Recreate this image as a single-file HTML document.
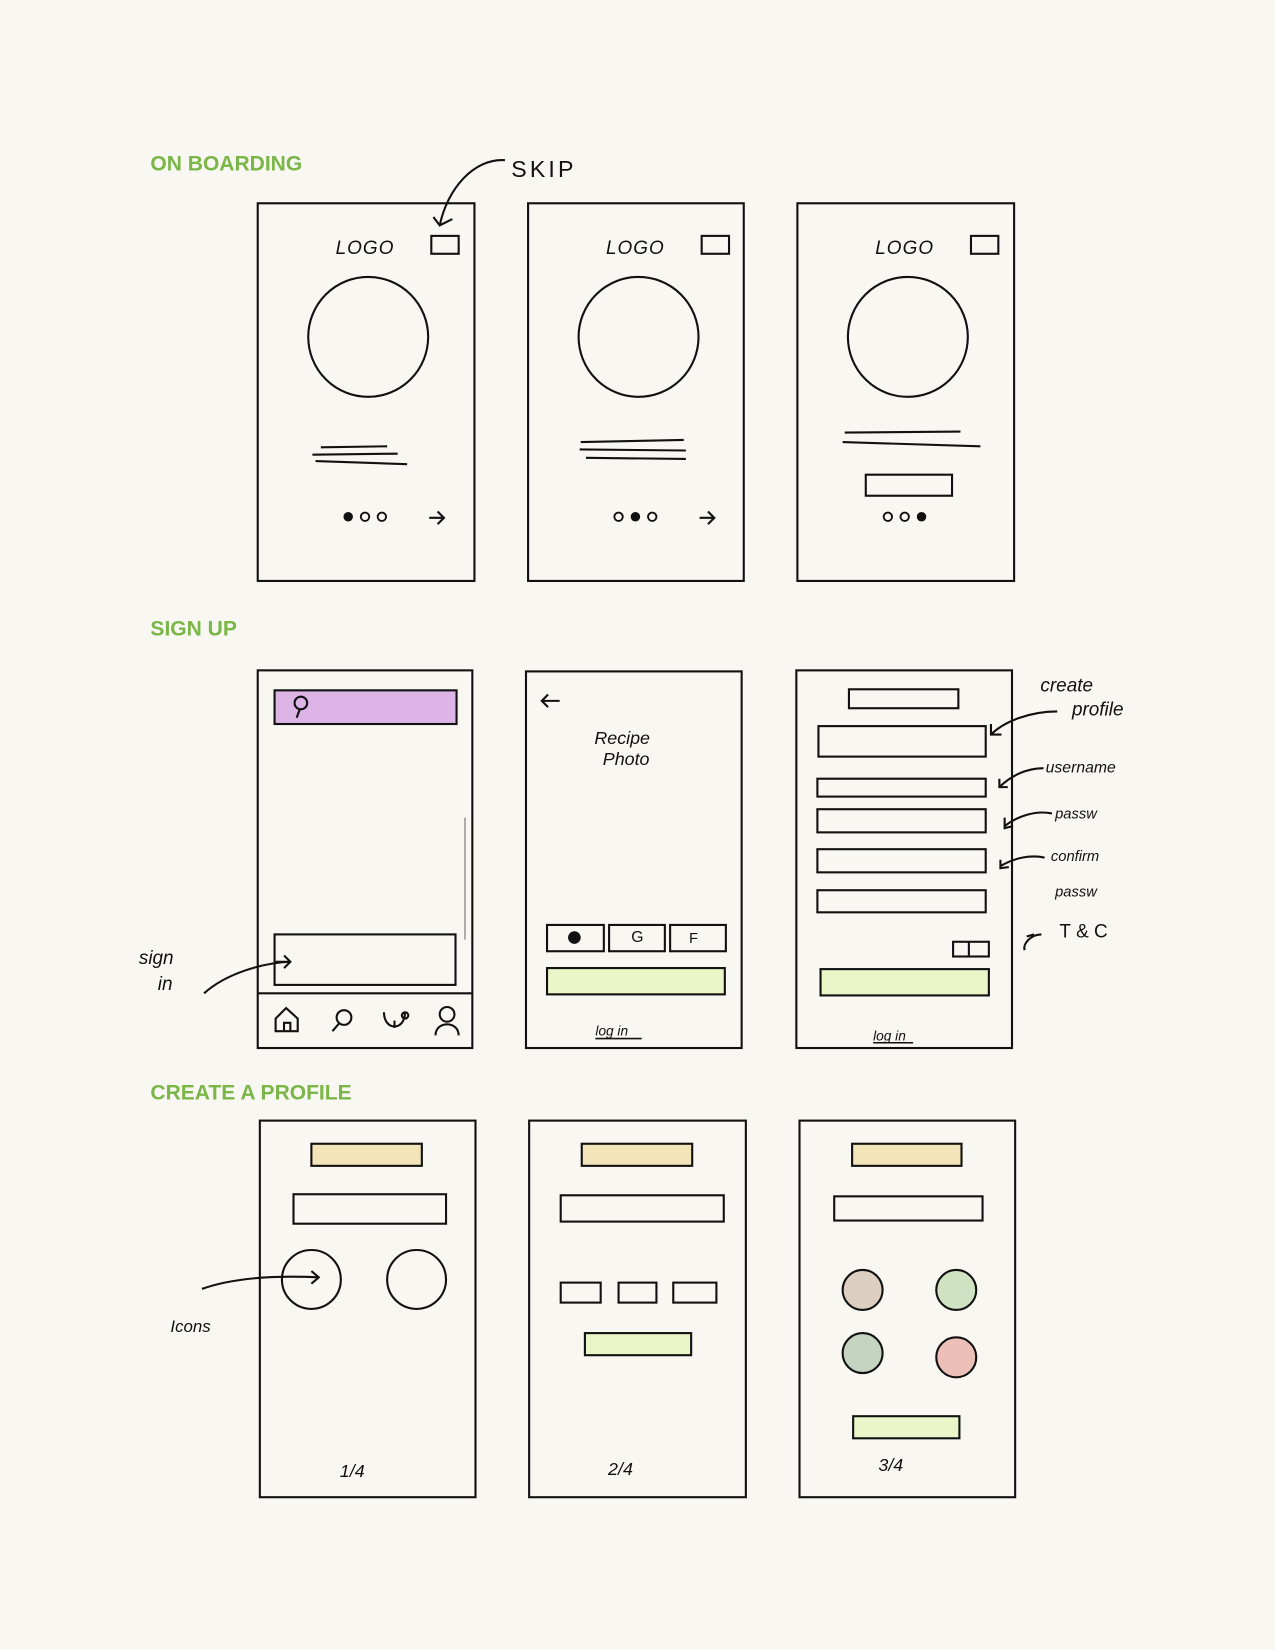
<!DOCTYPE html>
<html><head><meta charset="utf-8"><style>
html,body{margin:0;padding:0;background:#f8f7f2;}
svg{display:block}
.h{font-family:"Liberation Sans",sans-serif;font-weight:bold;font-size:20px;fill:#7ab648}
.hw{font-family:"Liberation Sans",sans-serif;fill:#111;font-style:italic}
</style></head><body>
<svg width="1275" height="1650" viewBox="0 0 1212 1568" xmlns="http://www.w3.org/2000/svg">
<rect width="1212" height="1568" fill="#f8f7f2"/>
<g fill="none" stroke="#111" stroke-width="2">
<rect x="245" y="193" width="206" height="359"/>
<rect x="502" y="193" width="205" height="359"/>
<rect x="758" y="193" width="206" height="359"/>
<rect x="410" y="224" width="26" height="17"/>
<rect x="667" y="224" width="26" height="17"/>
<rect x="923" y="224" width="26" height="17"/>
<circle cx="350" cy="320" r="57"/>
<circle cx="607" cy="320" r="57"/>
<circle cx="863" cy="320" r="57"/>
<path d="M305 425 L368 424 M297 432 L378 431 M300 438 L387 441"/>
<path d="M552 420 L650 418 M551 427 L652 428 M557 435 L652 436"/>
<path d="M803 411 L913 410 M801 420 L932 424"/>
<rect x="823" y="451" width="82" height="20"/>
<path d="M408 492 L422 492 M416 486 L422 492 L416 498"/>
<path d="M665 492 L679 492 M673 486 L679 492 L673 498"/>
<path d="M480 152 C450 150 425 180 418 214 M412 206 L418 214 L430 208"/>
<rect x="245" y="637" width="204" height="359"/>
<rect x="500" y="638" width="205" height="358"/>
<rect x="757" y="637" width="205" height="359"/>
<rect x="261" y="656" width="173" height="32" fill="#dcb4e6"/>
<circle cx="286" cy="668" r="6"/><path d="M285 674 L282 682"/>
<path d="M442 777 L442 893" stroke="#999" stroke-width="1.5"/>
<rect x="261" y="888" width="172" height="48"/>
<path d="M245 944 L449 944"/>
<path d="M262 914 L276 914 M270 908 L276 914 L270 920"/>
<path d="M194 944 C215 925 250 915 276 914"/>
<path d="M262 980 L262 968 L272 958 L283 968 L283 980 Z M270 980 L270 972 L276 972 L276 980"/>
<circle cx="327" cy="967" r="7"/><path d="M322 973 L316 980"/>
<path d="M365 962 C365 980 385 980 385 962 M375 977 L375 970 M385 962 a3 3 0 1 0 0.1 0"/>
<circle cx="425" cy="964" r="7"/><path d="M414 984 C414 970 436 970 436 984"/>
<path d="M515 666 L532 666 M521 660 L515 666 L521 672"/>
<rect x="520" y="879" width="54" height="25"/>
<rect x="579" y="879" width="53" height="25"/>
<rect x="637" y="879" width="53" height="25"/>
<rect x="520" y="920" width="169" height="25" fill="#eaf6c8"/>
<path d="M566 987 L610 987 M830 991 L868 991" stroke-width="1.5"/>
<rect x="807" y="655" width="104" height="18"/>
<rect x="778" y="690" width="159" height="29"/>
<rect x="777" y="740" width="160" height="17"/>
<rect x="777" y="769" width="160" height="22"/>
<rect x="777" y="807" width="160" height="22"/>
<rect x="777" y="846" width="160" height="21"/>
<rect x="906" y="895" width="34" height="14"/><path d="M921 895 L921 909"/>
<rect x="780" y="921" width="160" height="25" fill="#eaf6c8"/>
<path d="M1005 676 C980 676 955 685 942 698 M942 688 L942 698 L952 698"/>
<path d="M992 730 C975 730 960 738 950 748 M950 740 L950 748 L958 748"/>
<path d="M1000 773 C985 770 968 775 955 785 M955 777 L955 787 L963 785"/>
<path d="M993 815 C980 812 965 815 951 823 M951 817 L951 825 L959 824"/>
<path d="M990 888 C980 888 972 897 974 903 M976 890 L983 888"/>
<rect x="247" y="1065" width="205" height="358"/>
<rect x="503" y="1065" width="206" height="358"/>
<rect x="760" y="1065" width="205" height="358"/>
<rect x="296" y="1087" width="105" height="21" fill="#f2e4b8"/>
<rect x="279" y="1135" width="145" height="28"/>
<circle cx="296" cy="1216" r="28"/><circle cx="396" cy="1216" r="28"/>
<path d="M192 1225 C220 1215 260 1212 303 1214 M296 1208 L303 1214 L296 1220"/>
<rect x="553" y="1087" width="105" height="21" fill="#f2e4b8"/>
<rect x="533" y="1136" width="155" height="25"/>
<rect x="533" y="1219" width="38" height="19"/>
<rect x="588" y="1219" width="36" height="19"/>
<rect x="640" y="1219" width="41" height="19"/>
<rect x="556" y="1267" width="101" height="21" fill="#eaf6c8"/>
<rect x="810" y="1087" width="104" height="21" fill="#f2e4b8"/>
<rect x="793" y="1137" width="141" height="23"/>
<circle cx="820" cy="1226" r="19" fill="#dccfc2"/>
<circle cx="909" cy="1226" r="19" fill="#cfe3c2"/>
<circle cx="820" cy="1286" r="19" fill="#c4d4c0"/>
<circle cx="909" cy="1290" r="19" fill="#ecc0b8"/>
<rect x="811" y="1346" width="101" height="21" fill="#eaf6c8"/>
</g>
<g fill="#111">
<circle cx="331" cy="491" r="4.5"/><circle cx="604" cy="491" r="4.5"/><circle cx="876" cy="491" r="4.5"/>
<circle cx="546" cy="891" r="6"/>
</g>
<g fill="none" stroke="#111" stroke-width="1.8">
<circle cx="347" cy="491" r="4"/><circle cx="363" cy="491" r="4"/>
<circle cx="588" cy="491" r="4"/><circle cx="620" cy="491" r="4"/>
<circle cx="844" cy="491" r="4"/><circle cx="860" cy="491" r="4"/>
</g>
<text class="h" x="143" y="162">ON BOARDING</text>
<text class="h" x="143" y="604">SIGN UP</text>
<text class="h" x="143" y="1045">CREATE A PROFILE</text>
<g class="hw">
<text x="486" y="168" font-size="22" style="font-style:normal;letter-spacing:3px">SKIP</text>
<text x="319" y="241" font-size="18" letter-spacing="1">LOGO</text>
<text x="576" y="241" font-size="18" letter-spacing="1">LOGO</text>
<text x="832" y="241" font-size="18" letter-spacing="1">LOGO</text>
<text x="600" y="895" font-size="15" style="font-style:normal">G</text>
<text x="655" y="896" font-size="14" style="font-style:normal">F</text>
<text x="565" y="707" font-size="17">Recipe</text>
<text x="573" y="727" font-size="17">Photo</text>
<text x="566" y="984" font-size="13">log in</text>
<text x="830" y="989" font-size="13">log in</text>
<text x="989" y="657" font-size="18">create</text>
<text x="1019" y="680" font-size="18">profile</text>
<text x="994" y="734" font-size="15">username</text>
<text x="1003" y="778" font-size="14">passw</text>
<text x="999" y="818" font-size="14">confirm</text>
<text x="1003" y="852" font-size="14">passw</text>
<text x="1007" y="891" font-size="18" style="font-style:normal;letter-spacing:5px">T&amp;C</text>
<text x="132" y="916" font-size="18">sign</text>
<text x="150" y="941" font-size="18">in</text>
<text x="162" y="1266" font-size="16">Icons</text>
<text x="323" y="1404" font-size="17">1/4</text>
<text x="578" y="1402" font-size="17">2/4</text>
<text x="835" y="1398" font-size="17">3/4</text>
</g>
</svg>
</body></html>
